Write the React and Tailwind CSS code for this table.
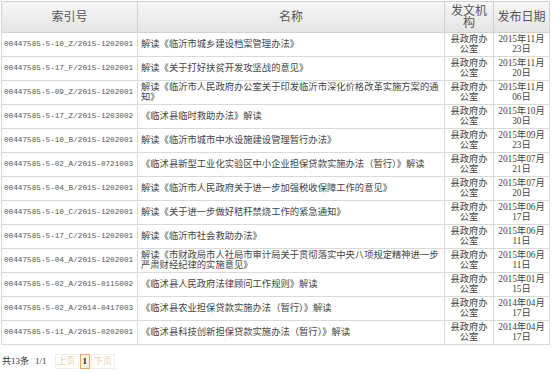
import React from "react";

const rows = [
  ["00447585-5-10_Z/2015-1202001", "解读《临沂市城乡建设档案管理办法》", "2015年11月", "23日"],
  ["00447585-5-17_F/2015-1202001", "解读《关于打好扶贫开发攻坚战的意见》", "2015年11月", "20日"],
  ["00447585-5-09_Z/2015-1202001", "解读《临沂市人民政府办公室关于印发临沂市深化价格改革实施方案的通知》", "2015年11月", "06日"],
  ["00447585-5-17_Z/2015-1203002", "《临沭县临时救助办法》解读", "2015年10月", "30日"],
  ["00447585-5-10_B/2015-1202001", "解读《临沂市城市中水设施建设管理暂行办法》", "2015年09月", "23日"],
  ["00447585-5-02_A/2015-0721003", "《临沭县新型工业化实验区中小企业担保贷款实施办法（暂行）》解读", "2015年07月", "21日"],
  ["00447585-5-04_B/2015-1202001", "解读《临沂市人民政府关于进一步加强税收保障工作的意见》", "2015年07月", "20日"],
  ["00447585-5-10_C/2015-1202001", "解读《关于进一步做好秸秆禁烧工作的紧急通知》", "2015年06月", "17日"],
  ["00447585-5-17_C/2015-1202001", "解读《临沂市社会救助办法》", "2015年06月", "11日"],
  ["00447585-5-04_A/2015-1202001", "解读《市财政局市人社局市审计局关于贯彻落实中央八项规定精神进一步严肃财经纪律的实施意见》", "2015年06月", "11日"],
  ["00447585-5-02_A/2015-0115002", "《临沭县人民政府法律顾问工作规则》解读", "2015年01月", "15日"],
  ["00447585-5-02_A/2014-0417003", "《临沭县农业担保贷款实施办法（暂行）》解读", "2014年04月", "17日"],
  ["00447585-5-11_A/2015-0202001", "《临沭县科技创新担保贷款实施办法（暂行）》解读", "2014年04月", "17日"],
];

const cjk = { fontFamily: '"Liberation Serif", "Noto Sans CJK SC", serif' };

export default function App() {
  return (
    <div className="w-[554px] h-[373px] bg-white pl-px pt-px" style={cjk}>
      <table className="w-[548px] table-fixed border-collapse border border-[#cfcfcf] text-[#333]">
        <colgroup>
          <col className="w-[136px]" />
          <col className="w-[307px]" />
          <col className="w-[49px]" />
          <col className="w-[56px]" />
        </colgroup>
        <thead>
          <tr className="h-[31px] bg-gradient-to-b from-[#f7f7f7] to-[#e4e4e4] text-[12px] leading-[12px] text-[#555]">
            <th className="border border-[#d2d2d2] font-normal">索引号</th>
            <th className="border border-[#d2d2d2] font-normal">名称</th>
            <th className="border border-[#d2d2d2] px-[3px] font-normal">发文机构</th>
            <th className="border border-[#d2d2d2] font-normal">发布日期</th>
          </tr>
        </thead>
        <tbody>
          {rows.map((r, i) => (
            <tr key={i} className="h-[24px]">
              <td className="border border-[#dadada] pl-[2px] align-middle font-['Liberation_Mono',monospace] text-[7.7px] text-[#555] whitespace-nowrap overflow-hidden">
                {r[0]}
              </td>
              <td className="border border-[#dadada] px-[3px] align-middle text-[9.3px] leading-[9.5px] text-[#444]">
                {r[1]}
              </td>
              <td className="border border-[#dadada] px-[2px] text-center align-middle text-[9.3px] leading-[9.5px] text-[#444]">
                县政府办公室
              </td>
              <td className="border border-[#dadada] text-center align-middle text-[9.3px] leading-[9.5px] text-[#444]">
                {r[2]}
                <br />
                {r[3]}
              </td>
            </tr>
          ))}
        </tbody>
      </table>
      <div className="mt-[9px] flex items-center text-[9px] text-[#333]">
        <span className="ml-[1px]">共13条</span>
        <span className="ml-[6px]">1/1</span>
        <span className="ml-[8px] border border-[#eee] px-[2px] leading-[13px] text-[#e8cfa8]">上页</span>
        <span className="ml-px border border-[#e8a96a] bg-[#fff3dc] px-[2px] leading-[13px] font-bold text-[#222]">1</span>
        <span className="ml-px border border-[#eee] px-[2px] leading-[13px] text-[#e8cfa8]">下页</span>
      </div>
    </div>
  );
}
